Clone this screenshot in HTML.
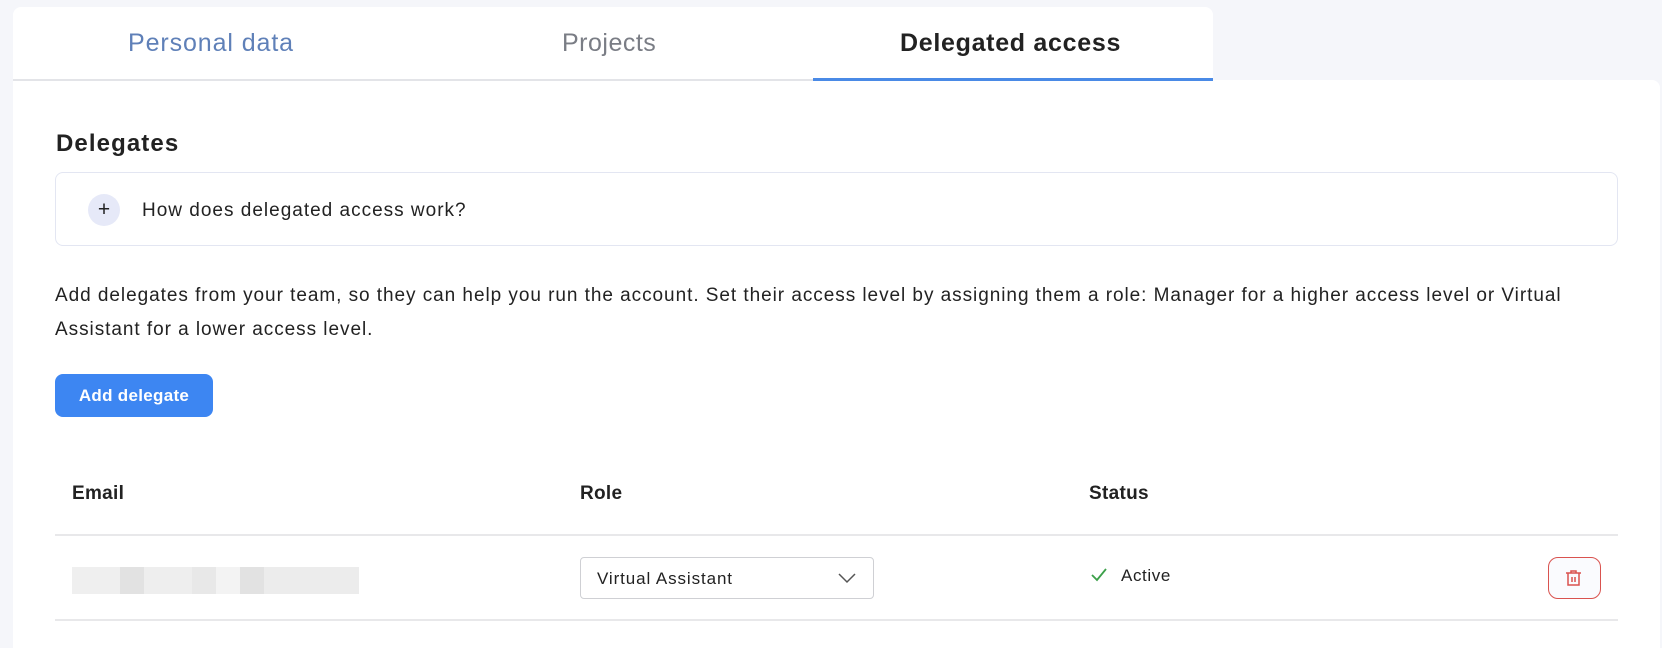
<!DOCTYPE html>
<html><head><style>
*{box-sizing:border-box;margin:0;padding:0}
body{width:1662px;height:648px;background:#f5f6fa;font-family:"Liberation Sans",sans-serif;position:relative;overflow:hidden;color:#222}
.abs{position:absolute}
</style></head><body>
<div class="abs" style="left:13px;top:7px;width:1200px;height:75px;background:#fff;border-radius:8px 8px 0 0"></div>
<div class="abs" style="left:13px;top:80px;width:1647px;height:568px;background:#fff;border-radius:0 8px 0 0"></div>
<div class="abs" style="left:13px;top:79px;width:800px;height:2px;background:#e3e4e8"></div>
<div class="abs" style="left:813px;top:78px;width:400px;height:3px;background:#4a8ae6"></div>
<div class="abs" style="left:128px;top:29px;font-size:25px;letter-spacing:0.9px;color:#5f80b8">Personal data</div>
<div class="abs" style="left:562px;top:29px;font-size:25px;letter-spacing:0.5px;color:#7a7d85">Projects</div>
<div class="abs" style="left:900px;top:29px;font-size:25px;letter-spacing:0.7px;font-weight:bold;color:#222">Delegated access</div>
<div class="abs" style="left:56px;top:130px;font-size:24px;letter-spacing:1.1px;font-weight:bold">Delegates</div>
<div class="abs" style="left:55px;top:172px;width:1563px;height:74px;border:1px solid #e3e6f2;border-radius:8px"></div>
<div class="abs" style="left:88px;top:194px;width:32px;height:32px;border-radius:50%;background:#e6e9f8;text-align:center;line-height:31px;font-size:21px">+</div>
<div class="abs" style="left:142px;top:200px;font-size:19px;letter-spacing:1.0px">How does delegated access work?</div>
<div class="abs" style="left:55px;top:279px;width:1563px;font-size:19px;letter-spacing:0.95px;line-height:34px">Add delegates from your team, so they can help you run the account. Set their access level by assigning them a role: Manager for a higher access level or Virtual Assistant for a lower access level.</div>
<div class="abs" style="left:55px;top:374px;width:158px;height:43px;background:#3d86f2;border-radius:8px;color:#fff;font-size:17px;letter-spacing:0.3px;font-weight:bold;text-align:center;line-height:43px">Add delegate</div>
<div class="abs" style="left:72px;top:483px;font-size:19px;font-weight:bold;letter-spacing:0.3px">Email</div>
<div class="abs" style="left:580px;top:483px;font-size:19px;font-weight:bold;letter-spacing:0.3px">Role</div>
<div class="abs" style="left:1089px;top:483px;font-size:19px;font-weight:bold;letter-spacing:0.3px">Status</div>
<div class="abs" style="left:55px;top:534px;width:1563px;height:2px;background:#e8e8ea"></div>
<div class="abs" style="left:72px;top:567px;width:287px;height:27px;background:linear-gradient(90deg,#efefef 0,#efefef 48px,#e2e2e2 48px,#e2e2e2 72px,#eee 72px,#eee 120px,#e8e8e8 120px,#e8e8e8 144px,#f3f3f3 144px,#f3f3f3 168px,#e2e2e2 168px,#e2e2e2 192px,#ececec 192px)"></div>
<div class="abs" style="left:580px;top:557px;width:294px;height:42px;border:1px solid #cfd0d4;border-radius:4px"></div>
<div class="abs" style="left:597px;top:569px;font-size:17px;letter-spacing:0.9px">Virtual Assistant</div>
<svg class="abs" style="left:838px;top:572px" width="18" height="12"><path d="M1 2l8 8 8-8" fill="none" stroke="#555" stroke-width="1.5"/></svg>
<svg class="abs" style="left:1090px;top:567px" width="18" height="16"><path d="M2 8l5 5 9-11" fill="none" stroke="#3ca04a" stroke-width="1.8"/></svg>
<div class="abs" style="left:1121px;top:566px;font-size:17px;letter-spacing:0.6px">Active</div>
<div class="abs" style="left:1548px;top:557px;width:53px;height:42px;border:1px solid #d9534f;border-radius:10px;background:#fafbfe"></div>
<svg class="abs" style="left:1564px;top:569px" width="20" height="20"><path d="M2 4h15M7 4V2h5v2M4 4v12h11V4M8 8v5M11 8v5" fill="none" stroke="#d9534f" stroke-width="1.5"/></svg>
<div class="abs" style="left:55px;top:619px;width:1563px;height:2px;background:#e8e8ea"></div>
</body></html>
